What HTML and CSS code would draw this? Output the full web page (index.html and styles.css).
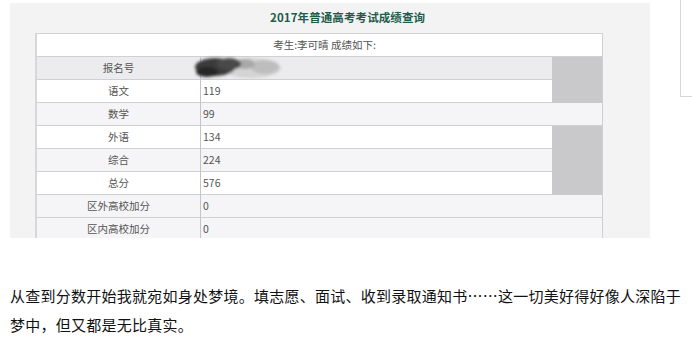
FILE: index.html
```html
<!DOCTYPE html>
<html lang="zh-CN">
<head>
<meta charset="utf-8">
<title>2017年普通高考考试成绩查询</title>
<link rel="stylesheet" href="styles.css">
</head>
<body>
<div class="top">
  <div class="shot">
    <div class="title">2017年普通高考考试成绩查询</div>
    <div class="table">
      <div class="head">考生:李可晴 成绩如下:</div>
      <div class="row gray"><div class="lab">报名号</div><div class="val smudge-cell">
        <svg class="smudge" width="100" height="32" viewBox="0 0 100 32">
          <defs><filter id="b" x="-20%" y="-40%" width="140%" height="180%"><feGaussianBlur stdDeviation="1.8"/></filter></defs>
          <g filter="url(#b)">
            <ellipse cx="62" cy="16" rx="30" ry="10" fill="#d4d4d4"/>
            <ellipse cx="76" cy="15" rx="14" ry="7" fill="#bdbdbd"/>
            <ellipse cx="56" cy="12" rx="10" ry="5" fill="#a8a8a8"/>
            <ellipse cx="26" cy="15" rx="20" ry="9" fill="#3a3a3a"/>
            <ellipse cx="40" cy="12" rx="12" ry="6" fill="#4a4a4a"/>
            <ellipse cx="18" cy="20" rx="11" ry="5" fill="#262626"/>
          </g>
        </svg>
      </div><div class="side"></div></div>
      <div class="row white"><div class="lab">语文</div><div class="val">119</div><div class="side"></div></div>
      <div class="row light"><div class="lab">数学</div><div class="val">99</div></div>
      <div class="row white"><div class="lab">外语</div><div class="val">134</div><div class="side"></div></div>
      <div class="row light"><div class="lab">综合</div><div class="val">224</div><div class="side"></div></div>
      <div class="row white"><div class="lab">总分</div><div class="val">576</div><div class="side"></div></div>
      <div class="row light"><div class="lab">区外高校加分</div><div class="val">0</div></div>
      <div class="row light"><div class="lab">区内高校加分</div><div class="val">0</div></div>
    </div>
  </div>
  <div class="edge"></div>
</div>
<p class="text">从查到分数开始我就宛如身处梦境。填志愿、面试、收到录取通知书……这一切美好得好像人深陷于梦中，但又都是无比真实。</p>
</body>
</html>
```

FILE: styles.css
```css
html, body {
  margin: 0;
  padding: 0;
  background: #ffffff;
  font-family: "Noto Sans CJK SC", "Noto Sans", sans-serif;
}

.top {
  display: flex;
  align-items: flex-start;
}

.shot {
  margin: 3px 0 0 10px;
  width: 640px;
  height: 235px;
  background: #f3f3f4;
  overflow: hidden;
}

.edge {
  margin-left: auto;
  width: 11px;
  height: 96px;
  border-left: 1px solid #d6d6d6;
  border-bottom: 1px solid #d6d6d6;
}

.title {
  height: 30px;
  line-height: 28px;
  padding-left: 260px;
  font-size: 11.5px;
  font-weight: 700;
  color: #1f5c4a;
  letter-spacing: 0.1px;
}

.table {
  margin-left: 25px;
  width: 565px;
  border-left: 2px solid #d7d7d9;
  border-top: 1px solid #d2d2d4;
  border-right: 1px solid #cfcfd1;
  font-size: 10.5px;
  color: #555555;
}

.head {
  height: 22px;
  line-height: 22px;
  text-align: center;
  background: #ffffff;
  border-bottom: 1px solid #d0d0d2;
  padding-left: 10px;
}

.row {
  display: grid;
  grid-template-columns: 164px 1fr auto;
  height: 23px;
}

.lab, .val {
  height: 22px;
  line-height: 22px;
  border-bottom: 1px solid #d0d0d2;
}

.lab {
  text-align: center;
  border-right: 1px solid #c4c4c6;
}

.val {
  padding-left: 2px;
  position: relative;
}

.side {
  width: 50px;
  height: 23px;
  background: #c9c8ca;
}

.gray .lab, .gray .val { background: #ececee; }
.white .lab, .white .val { background: #ffffff; }
.light .lab, .light .val { background: #f5f4f6; }

.smudge {
  position: absolute;
  left: -12px;
  top: -5px;
}

.text {
  margin: 43px 0 0 10px;
  font-size: 15px;
  letter-spacing: 0.25px;
  line-height: 29px;
  color: #111111;
}
```
